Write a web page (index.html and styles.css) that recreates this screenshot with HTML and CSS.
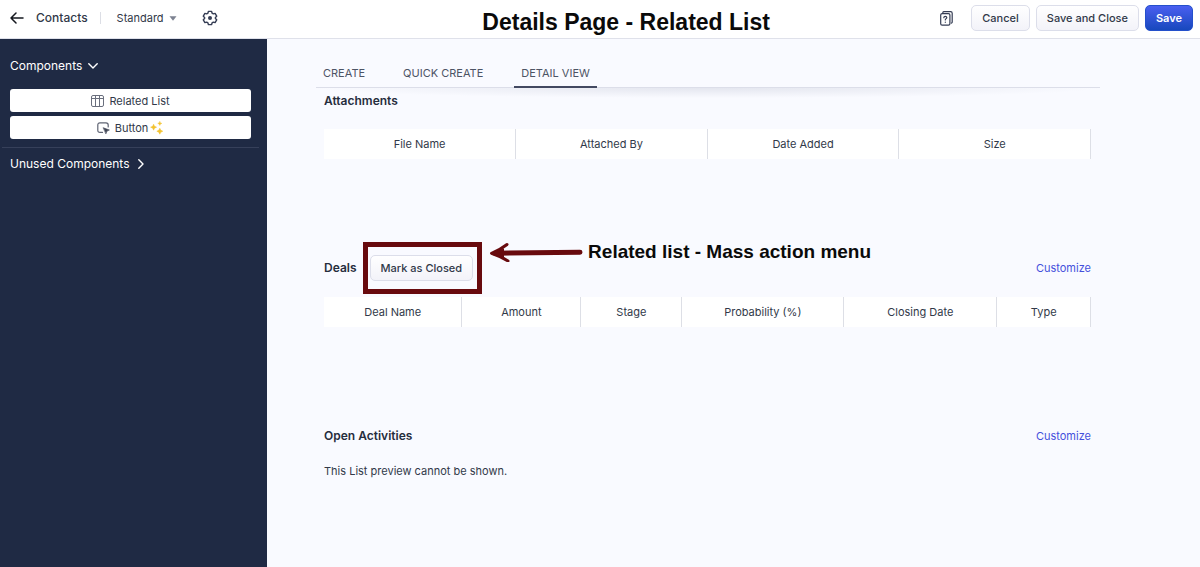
FILE: index.html
```html
<!DOCTYPE html>
<html lang="en">
  <head>
    <meta charset="UTF-8" />
    <meta name="viewport" content="width=device-width, initial-scale=1.0" />
    <title>Contacts - Details Page</title>
    <link rel="stylesheet" href="styles.css">
  </head>
  <body>
    <!-- Top bar -->
    <header class="topbar">
      <div class="topbar-left">
        <button class="icon-button" aria-label="Back">
          <svg width="14" height="12" viewBox="0 0 14 12" fill="none" stroke="#15181f" stroke-width="1.5" stroke-linecap="round" stroke-linejoin="round">
            <path d="M13 6H1M6 1L1 6l5 5" />
          </svg>
        </button>
        <span class="module">Contacts</span>
        <span class="divider"></span>
        <button class="layout-button">
          Standard
          <svg width="8" height="5" viewBox="0 0 8 5" fill="#7d8291"><path d="M0.5 0.3h7L4 4.8z" /></svg>
        </button>
        <button class="icon-button settings" aria-label="Settings">
          <svg width="16" height="16" viewBox="0 0 16 16" fill="none" stroke="#353d54" stroke-width="1.4" stroke-linejoin="round">
            <path d="M6.4 1.4h3.2l.5 1.8 1.2.7 1.8-.5 1.6 2.8-1.3 1.3v1l1.3 1.3-1.6 2.8-1.8-.5-1.2.7-.5 1.8H6.4l-.5-1.8-1.2-.7-1.8.5-1.6-2.8 1.3-1.3v-1L1.3 6.2l1.6-2.8 1.8.5 1.2-.7z" />
            <circle cx="8" cy="8" r="2" fill="#353d54" stroke="none" />
          </svg>
        </button>
      </div>
      <h1 class="page-title">Details Page - Related List</h1>
      <div class="topbar-right">
        <button class="icon-button help" aria-label="Help">
          <svg width="13" height="15" viewBox="0 0 13 15" fill="none" stroke="#353d54" stroke-width="1.2" stroke-linecap="round" stroke-linejoin="round">
            <path d="M2.8 1.4Q3.2.7 4 .7h6.6q1.6 0 1.6 1.6v8.6q0 .8-.7 1.2" />
            <rect x="0.7" y="2.7" width="9.2" height="11.5" rx="1.4" />
            <path d="M3.8 6.7q.1-1.4 1.5-1.4t1.5 1.3q0 .8-.8 1.2-.7.4-.7 1.2" />
            <path d="M5.3 11.2v.1" />
          </svg>
        </button>
        <button class="button">Cancel</button>
        <button class="button">Save and Close</button>
        <button class="button primary">Save</button>
      </div>
    </header>

    <div class="layout">
      <!-- Sidebar -->
      <aside class="sidebar">
        <div class="group">
          <button class="group-title">
            Components
            <svg width="10" height="6" viewBox="0 0 10 6" fill="none" stroke="#fff" stroke-width="1.4" stroke-linecap="round" stroke-linejoin="round"><path d="M.8.8L5 5 9.2.8" /></svg>
          </button>
          <button class="component">
            <svg width="13" height="12" viewBox="0 0 13 12" fill="none" stroke="#6a6f7d" stroke-width="1">
              <rect x="0.5" y="0.5" width="12" height="11" rx="1.5" />
              <path d="M.5 3.5h12M4.5 .5v11M8.5 .5v11" />
            </svg>
            Related List
          </button>
          <button class="component">
            <svg width="13" height="12" viewBox="0 0 13 12" fill="none" stroke="#5f6473" stroke-width="1.2" stroke-linecap="round">
              <path d="M5.5 10.4H3Q.8 10.4.8 8.2V3Q.8.8 3 .8h6q2.2 0 2.2 2.2v2" />
              <path d="M6.4 5.8l6 2.2-2.4 1.1L9 11.6z" fill="#414757" stroke="#414757" stroke-width=".6" stroke-linejoin="round" />
            </svg>
            <span class="component-label">
              Button
              <svg width="14" height="14" viewBox="0 0 14 14" fill="#f2c230" stroke="#f2c230" stroke-width=".5">
                <path d="M3.600 3.200Q3.900 5.900 6.600 6.200 3.900 6.500 3.600 9.200 3.300 6.500 .6 6.200 3.300 5.900 3.600 3.200z" />
                <path d="M9.800 .4Q10 2.200 11.800 2.400 10 2.600 9.800 4.400 9.600 2.600 7.800 2.400 9.600 2.200 9.800 .4z" />
                <path d="M9.800 7.200Q10.300 9.700 12.800 10.200 10.300 10.700 9.800 13.200 9.300 10.700 6.800 10.200 9.300 9.700 9.800 7.200z" />
              </svg>
            </span>
          </button>
        </div>
        <div class="group unused">
          <button class="group-title">
            Unused Components
            <svg width="6" height="10" viewBox="0 0 6 10" fill="none" stroke="#fff" stroke-width="1.4" stroke-linecap="round" stroke-linejoin="round"><path d="M.8.8L5 5 .8 9.200" /></svg>
          </button>
        </div>
      </aside>

      <!-- Canvas -->
      <main class="content">
        <nav class="tabs">
          <a class="tab" href="#create">CREATE</a>
          <a class="tab" href="#quick">QUICK CREATE</a>
          <a class="tab active" href="#detail">DETAIL VIEW</a>
        </nav>

        <section class="related attachments">
          <div class="related-header">
            <h2>Attachments</h2>
          </div>
          <table>
            <thead>
              <tr>
                <th>File Name</th>
                <th>Attached By</th>
                <th>Date Added</th>
                <th>Size</th>
              </tr>
            </thead>
          </table>
        </section>

        <section class="related deals">
          <div class="related-header">
            <h2>Deals</h2>
            <div class="highlight">
              <button class="button">Mark as Closed</button>
            </div>
            <div class="note">
              <svg width="94" height="20" viewBox="0 0 94 20" fill="none" stroke="#680a0e" stroke-linecap="round">
                <path d="M6 11.200L91 10.200" stroke-width="5" />
                <path d="M18 2.500Q11 8 2.500 11.300 12 14.500 19 19" stroke-width="3" stroke-linejoin="round" />
                <path d="M2 11.200L15 6.500v9z" fill="#680a0e" stroke="none" />
              </svg>
              Related list - Mass action menu
            </div>
            <a class="customize" href="#deals">Customize</a>
          </div>
          <table>
            <thead>
              <tr>
                <th class="col-name">Deal Name</th>
                <th class="col-amount">Amount</th>
                <th class="col-stage">Stage</th>
                <th class="col-probability">Probability (%)</th>
                <th class="col-date">Closing Date</th>
                <th class="col-type">Type</th>
              </tr>
            </thead>
          </table>
        </section>

        <section class="related activities">
          <div class="related-header">
            <h2>Open Activities</h2>
            <a class="customize" href="#activities">Customize</a>
          </div>
          <p>This List preview cannot be shown.</p>
        </section>
      </main>
    </div>
  </body>
</html>
```

FILE: styles.css
```css
* {
  box-sizing: border-box;
}

body {
  display: flex;
  flex-direction: column;
  min-height: 100vh;
  margin: 0;
  background: #f9faff;
  color: #313949;
  font-family: "Inter", "Liberation Sans", sans-serif;
  font-size: 11px;
  line-height: 16px;
}

h1,
h2,
p {
  margin: 0;
}

button {
  font: inherit;
  color: inherit;
  cursor: pointer;
}

svg {
  flex: none;
}

/* Top bar */
.topbar {
  display: flex;
  height: 39px;
  background: #fff;
  border-bottom: 1px solid #dfe1ea;
}

.topbar-left {
  display: flex;
  align-items: center;
  width: 312px;
  padding: 0 0 2px 10px;
}

.icon-button,
.layout-button {
  display: flex;
  align-items: center;
  padding: 0;
  border: none;
  background: none;
}

.module {
  margin-left: 12px;
  font-size: 12px;
  font-weight: 500;
}

.divider {
  width: 1px;
  height: 12px;
  margin: 0 16px 0 12px;
  background: #dcdee5;
}

.layout-button {
  gap: 5px;
}

.settings {
  margin-left: 25px;
}

.page-title {
  flex: 1;
  padding-top: 9px;
  color: #0a0a0a;
  font-family: "Liberation Sans", Arial, sans-serif;
  font-size: 23px;
  line-height: 26px;
  text-align: center;
  white-space: nowrap;
}

.topbar-right {
  display: flex;
  align-items: center;
  gap: 6px;
  padding: 0 7px 2px 0;
}

.help {
  margin-right: 12px;
}

.button {
  height: 26px;
  padding: 0 10px;
  border: 1px solid #dcdeea;
  border-radius: 5px;
  background: linear-gradient(#fff, #f3f3f9);
  font-weight: 500;
  white-space: nowrap;
}

.primary {
  border-color: #2450cb;
  background: linear-gradient(#4a5ff0, #1748bd);
  color: #fff;
  font-weight: 600;
}

.layout {
  display: flex;
  flex: 1;
}

/* Sidebar */
.sidebar {
  flex: none;
  width: 267px;
  padding: 18px 8px 0 2px;
  background: #1f2a44;
}

.group {
  display: flex;
  flex-direction: column;
  gap: 4px;
  padding: 0 8px 8px;
}

.group-title {
  display: flex;
  align-items: center;
  gap: 6px;
  height: 18px;
  margin-bottom: 10px;
  padding: 0;
  border: none;
  background: none;
  color: #fff;
  font-size: 12px;
}

.component {
  display: flex;
  align-items: center;
  justify-content: center;
  gap: 5px;
  height: 23px;
  padding: 0;
  border: none;
  border-radius: 3px;
  background: #fff;
}

.component-label {
  display: flex;
  align-items: center;
  gap: 2px;
}

.unused {
  padding-top: 7px;
  border-top: 1px solid #36405a;
}

.unused .group-title {
  gap: 8px;
}

/* Canvas */
.content {
  flex: 1;
  padding: 19px 100px 0 49px;
}

.tabs {
  position: relative;
  display: flex;
  gap: 24px;
  height: 30px;
  border-bottom: 1px solid #dcdee9;
}

/* soft shadow below the tab line */
.tabs::after {
  content: "";
  position: absolute;
  top: 30px;
  left: 0;
  right: 0;
  height: 10px;
  background: radial-gradient(ellipse 50% 100% at 50% 0, #e4e6ef, transparent);
}

.tab {
  height: 30px;
  padding: 7px 7px 0;
  color: #4d5465;
  text-decoration: none;
}

.active {
  border-bottom: 2px solid #434961;
}

.related {
  position: relative;
  z-index: 1;
  padding: 0 9px 0 8px;
}

.related-header {
  display: flex;
  align-items: center;
  height: 26px;
}

.related h2 {
  color: #262d3d;
  font-size: 12px;
  font-weight: 600;
}

.attachments {
  min-height: 154px;
}

.attachments table {
  margin-top: 15px;
}

.deals {
  min-height: 181px;
}

.deals .related-header {
  height: 52px;
  margin-bottom: 3px;
}

.activities p {
  margin-top: 14px;
}

.customize {
  margin-left: auto;
  color: #4450dc;
  text-decoration: none;
}

table {
  width: 100%;
  table-layout: fixed;
  border-collapse: collapse;
  background: #fff;
}

th {
  height: 30px;
  padding: 0;
  border-right: 1px solid #dddfe6;
  font-weight: 400;
  text-align: center;
}

.col-name {
  width: 18%;
}

.col-amount {
  width: 15.5%;
}

.col-stage {
  width: 13.2%;
}

.col-probability {
  width: 21.1%;
}

.col-date {
  width: 20%;
}

.col-type {
  width: 12.2%;
}

/* Marked button and its note */
.highlight {
  display: flex;
  align-items: center;
  height: 52px;
  margin-left: 6px;
  padding: 0 4px 0 2px;
  border: 5px solid #680a0e;
}

.note {
  display: flex;
  align-items: center;
  align-self: flex-start;
  gap: 5px;
  height: 20px;
  margin-left: 7px;
  color: #0a0a0a;
  font-family: "Liberation Sans", Arial, sans-serif;
  font-size: 19px;
  font-weight: 700;
  line-height: 20px;
  white-space: nowrap;
}
```
